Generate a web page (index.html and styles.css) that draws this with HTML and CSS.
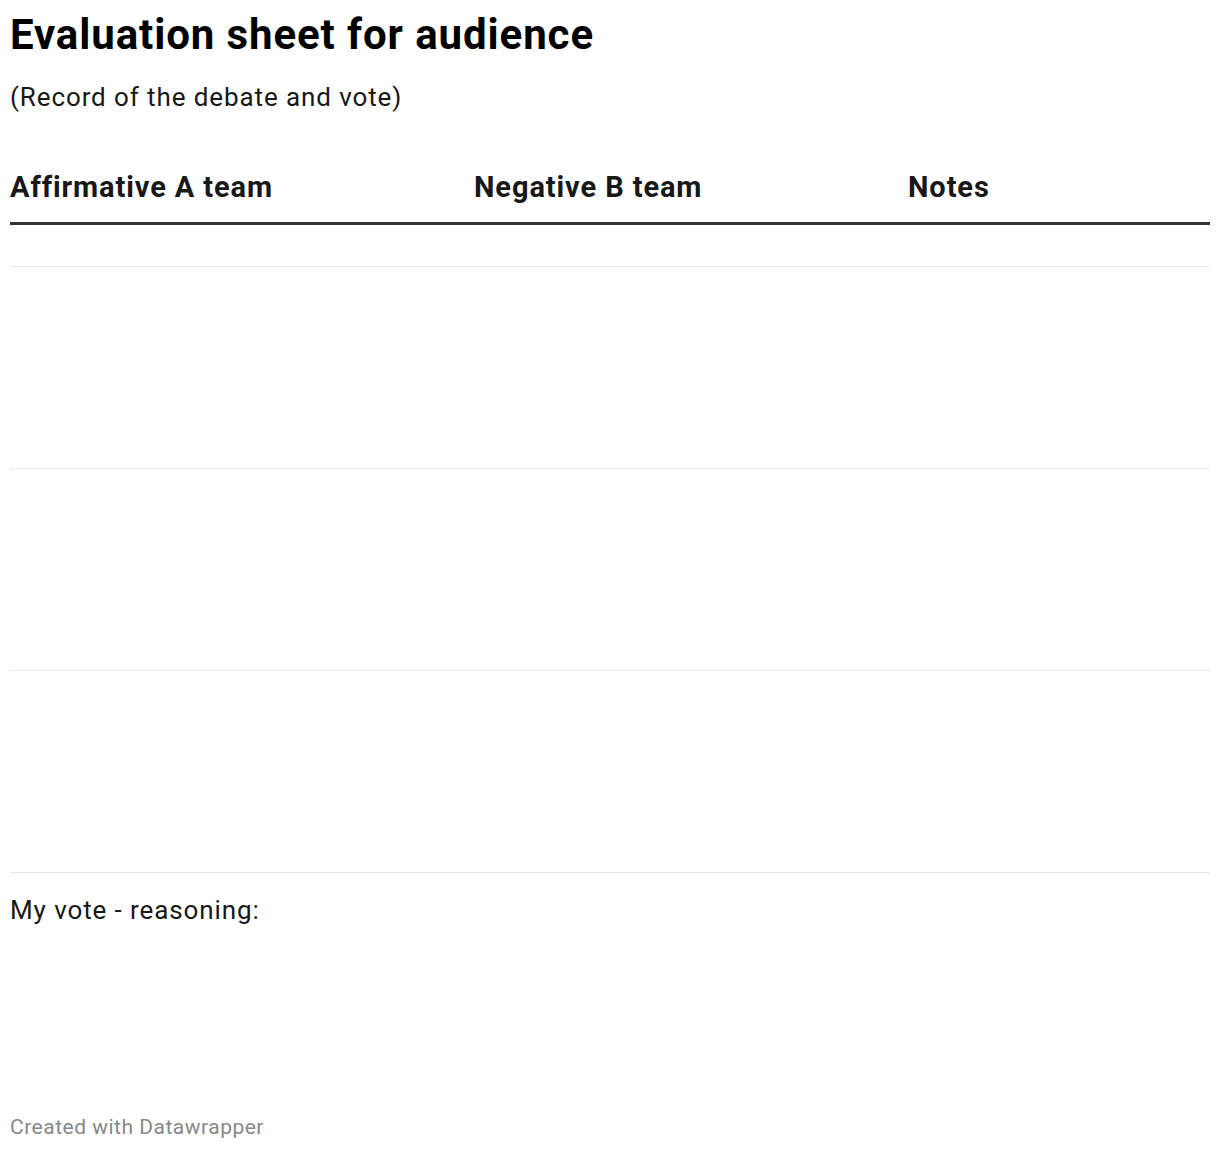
FILE: index.html
```html
<!DOCTYPE html>
<html>
<head>
<meta charset="utf-8">
<link rel="stylesheet" href="styles.css">
</head>
<body>
<div class="chart">
  <h1 class="title">Evaluation sheet for audience</h1>
  <p class="subtitle">(Record of the debate and vote)</p>
  <div class="table">
    <div class="row head">
      <div class="cell c1">Affirmative A team</div>
      <div class="cell c2">Negative B team</div>
      <div class="cell c3">Notes</div>
    </div>
    <div class="row first"></div>
    <div class="row tall"></div>
    <div class="row tall"></div>
    <div class="row tall"></div>
    <div class="row last">
      <div class="cell c1 vote">My vote - reasoning:</div>
    </div>
  </div>
  <div class="footer">Created with Datawrapper</div>
</div>
</body>
</html>
```
FILE: styles.css
```css
* { box-sizing: border-box; }
html, body { margin: 0; padding: 0; background: #fff; }
body { font-family: Roboto, "Liberation Sans", Arial, sans-serif; color: #181818; }
.chart { padding: 10px; width: 1220px; }
.title {
  margin: 0;
  font-size: 42px;
  font-weight: 700;
  line-height: 50px;
  letter-spacing: 0.9px;
  color: #000;
}
.subtitle {
  margin: 19px 0 0 0;
  font-size: 26px;
  line-height: 36px;
  letter-spacing: 0.9px;
  color: #181818;
}
.table { margin-top: 55px; width: 1200px; }
.row { display: grid; grid-template-columns: 464px 434px 302px; }
.head { border-bottom: 3px solid #333; padding-bottom: 18px; }
.head .cell { font-size: 29px; font-weight: 700; line-height: 34px; letter-spacing: 0.9px; color: #181818; }
.first { height: 42px; border-bottom: 1px solid #e8e8e8; }
.tall { height: 202px; border-bottom: 1px solid #e8e8e8; }
.vote { font-size: 26px; line-height: 34px; letter-spacing: 0.9px; padding-top: 20px; }
.last { height: 242px; }
.footer { font-size: 21px; color: #888; line-height: 24px; letter-spacing: 0.5px; }
```
